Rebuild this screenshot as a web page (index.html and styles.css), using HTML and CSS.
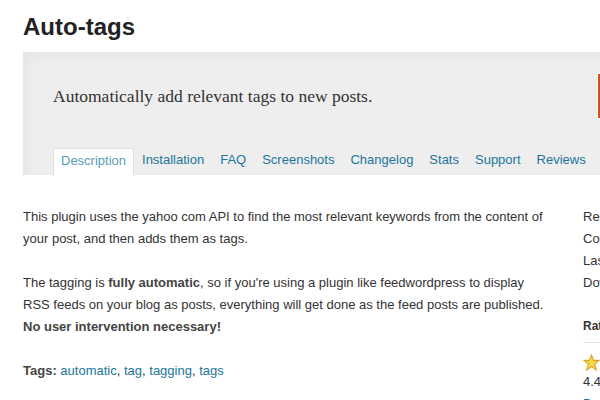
FILE: index.html
```html
<!DOCTYPE html>
<html>
<head>
<meta charset="utf-8">
<link rel="stylesheet" href="styles.css">
</head>
<body>
<div class="page">
  <h1 class="title">Auto-tags</h1>
  <div class="header">
    <div class="header-top">
      <p class="tagline">Automatically add relevant tags to new posts.</p>
      <a class="download">Download Version 1.0</a>
    </div>
    <ul class="tabs">
      <li class="tab active">Description</li>
      <li class="tab">Installation</li>
      <li class="tab">FAQ</li>
      <li class="tab">Screenshots</li>
      <li class="tab">Changelog</li>
      <li class="tab">Stats</li>
      <li class="tab">Support</li>
      <li class="tab">Reviews</li>
      <li class="tab">Developers</li>
    </ul>
  </div>
  <div class="content">
    <div class="main">
      <p>This plugin uses the yahoo com API to find the most relevant keywords from the content of your post, and then adds them as tags.</p>
      <p>The tagging is <b>fully automatic</b>, so if you're using a plugin like feedwordpress to display RSS feeds on your blog as posts, everything will get done as the feed posts are published. <b>No user intervention necessary!</b></p>
      <p class="tags"><b>Tags:</b> <a>automatic</a>, <a>tag</a>, <a>tagging</a>, <a>tags</a></p>
    </div>
    <div class="side">
      <ul class="meta">
        <li>Requires: 2.0 or higher</li>
        <li>Compatible up to: 2.3</li>
        <li>Last Updated: 2007-11-1</li>
        <li>Downloads: 3,412</li>
      </ul>
      <h4 class="side-title">Ratings</h4>
      <div class="rating">
        <svg class="star" width="17" height="17" viewBox="0 0 16 16"><polygon points="8,1 10,6 15,6 11,9.5 12.5,15 8,11.8 3.5,15 5,9.5 1,6 6,6" fill="#f7d44a" stroke="#d9a520" stroke-width="1"/></svg>
        <div class="score">4.4 out of 5 stars</div>
        <div class="more">5 stars</div>
      </div>
    </div>
  </div>
</div>
</body>
</html>
```
FILE: styles.css
```css
html, body {
  margin: 0;
  padding: 0;
  background: #fff;
  overflow: hidden;
}
.page {
  width: 800px;
  padding-left: 23px;
  font-family: "Liberation Sans", Arial, sans-serif;
  color: #333;
}
.title {
  margin: 0;
  padding-top: 12px;
  height: 40px;
  font-size: 24px;
  font-weight: bold;
  color: #222;
  line-height: 29px;
}
.header {
  background: #eeeeee;
  box-shadow: inset 6px 6px 10px #e6e6e6;
  padding: 0 0 0 30px;
}
.header-top {
  display: flex;
  align-items: center;
  height: 96px;
  padding-bottom: 8px;
  box-sizing: border-box;
}
.tagline {
  margin: 0;
  font-family: Georgia, "Liberation Serif", serif;
  font-size: 17.5px;
  color: #333;
}
.download {
  display: block;
  width: 200px;
  height: 46px;
  margin-left: auto;
  margin-right: 26px;
  padding-left: 24px;
  background: #d54e21;
  border: 1px solid #fff;
  box-sizing: border-box;
  color: #fff;
  font-size: 14px;
  line-height: 44px;
  white-space: nowrap;
  overflow: hidden;
}
.tabs {
  display: flex;
  list-style: none;
  margin: 0;
  padding: 0 0 3px;
  height: 24px;
}
.tab {
  padding: 0 8px;
  font-size: 13px;
  line-height: 24px;
  height: 27px;
  color: #21759b;
  white-space: nowrap;
}
.tab.active {
  padding: 0 7px;
  background: #fff;
  border: 1px solid #e0e0e0;
  border-bottom: 0;
  color: #5b9bb8;
}
.content {
  display: flex;
  padding-top: 31px;
}
.main {
  width: 525px;
  font-size: 13px;
  line-height: 22px;
}
.main p {
  margin: 0 0 22px;
}
.main b {
  color: #444;
}
.tags {
  line-height: 21px;
}
.tags a {
  color: #21759b;
}
.side {
  margin-left: 35px;
  font-size: 13px;
  line-height: 22px;
  color: #333;
  white-space: nowrap;
}
.meta {
  list-style: none;
  margin: 0;
  padding: 0;
}
.side-title {
  margin: 21px 0 0;
  font-size: 12px;
  font-weight: bold;
  line-height: 22px;
  padding-bottom: 5px;
  border-bottom: 1px solid #e5e5e5;
}
.rating {
  padding-top: 11px;
  line-height: 22px;
}
.star {
  display: block;
}
.score {
  font-size: 13px;
}
.more {
  color: #21759b;
}
```
